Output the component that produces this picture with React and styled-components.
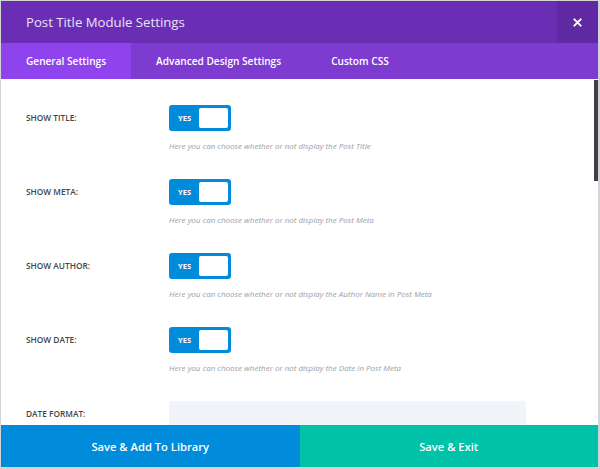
import styled, { createGlobalStyle } from "styled-components";

const GlobalStyle = createGlobalStyle`
  html, body {
    margin: 0;
    padding: 0;
    background: #d4d4d6;
  }
  * {
    box-sizing: border-box;
  }
`;

const rows = [
  { label: "Show Title:", help: "Here you can choose whether or not display the Post Title" },
  { label: "Show Meta:", help: "Here you can choose whether or not display the Post Meta" },
  { label: "Show Author:", help: "Here you can choose whether or not display the Author Name in Post Meta" },
  { label: "Show Date:", help: "Here you can choose whether or not display the Date in Post Meta" },
];

const App = () => {
  return (
    <>
      <GlobalStyle />
      <Page>
        <Modal>
          <Header>
            <Title>Post Title Module Settings</Title>
            <CloseButton>
              <svg width="9" height="9" viewBox="0 0 10 10">
                <path d="M1.5 1.5 L8.5 8.5 M8.5 1.5 L1.5 8.5" stroke="#fff" strokeWidth="2.2" strokeLinecap="round" />
              </svg>
            </CloseButton>
          </Header>
          <Tabs>
            <Tab $active>General Settings</Tab>
            <Tab>Advanced Design Settings</Tab>
            <Tab>Custom CSS</Tab>
          </Tabs>
          <Body>
            {rows.map((row) => (
              <Row key={row.label}>
                <Label>{row.label}</Label>
                <Field>
                  <Toggle>
                    <span>Yes</span>
                    <Knob />
                  </Toggle>
                  <Help>{row.help}</Help>
                </Field>
              </Row>
            ))}
            <Row>
              <Label>Date Format:</Label>
              <Field>
                <Input />
              </Field>
            </Row>
            <ScrollThumb />
          </Body>
          <Footer>
            <FooterButton $color="#008bdb">Save &amp; Add To Library</FooterButton>
            <FooterButton $color="#00c2a8">Save &amp; Exit</FooterButton>
          </Footer>
        </Modal>
      </Page>
    </>
  );
};

export default App;

const Page = styled.div`
  width: 600px;
  height: 469px;
  padding: 1px 2px 2px 1px;
  font-family: "Open Sans", "Liberation Sans", sans-serif;
`;

const Modal = styled.div`
  height: 100%;
  display: flex;
  flex-direction: column;
  background: #fff;
  overflow: hidden;
`;

const Header = styled.div`
  height: 42px;
  flex: none;
  display: flex;
  align-items: center;
  background: #6a2eb4;
`;

const Title = styled.h1`
  flex: 1;
  margin: 0;
  padding-left: 25px;
  font-size: 13.2px;
  font-weight: 400;
  color: #ebe2f7;
`;

const CloseButton = styled.div`
  width: 41px;
  height: 100%;
  display: flex;
  align-items: center;
  justify-content: center;
  background: #5f29a4;
`;

const Tabs = styled.div`
  height: 36px;
  flex: none;
  display: flex;
  background: #7e3bd0;
`;

const Tab = styled.div`
  display: flex;
  align-items: center;
  padding: 0 25px;
  font-size: 10.1px;
  font-weight: 600;
  color: #fff;
  background: ${(p) => (p.$active ? "#8f43ec" : "transparent")};
`;

const Body = styled.div`
  position: relative;
  flex: 1;
  overflow: hidden;
  padding-top: 26px;
`;

const Row = styled.div`
  display: flex;
  align-items: flex-start;
  padding-left: 25px;
  margin-bottom: 27px;
`;

const Label = styled.div`
  width: 143px;
  line-height: 26px;
  font-size: 8.3px;
  font-weight: 600;
  text-transform: uppercase;
  color: #3f454b;
`;

const Field = styled.div`
  display: flex;
  flex-direction: column;
`;

const Toggle = styled.div`
  width: 62px;
  height: 26px;
  display: flex;
  align-items: center;
  justify-content: space-between;
  padding: 0 3px 0 9px;
  border-radius: 3px;
  background: #008bdb;
  span {
    font-size: 7.5px;
    font-weight: 700;
    text-transform: uppercase;
    color: #fff;
  }
`;

const Knob = styled.div`
  width: 29px;
  height: 20px;
  border-radius: 2px;
  background: #fff;
`;

const Help = styled.div`
  margin-top: 8px;
  line-height: 13px;
  font-size: 8px;
  font-style: italic;
  color: #9aa0a8;
`;

const Input = styled.div`
  width: 357px;
  height: 40px;
  border-radius: 3px;
  background: #f1f4f8;
`;

const ScrollThumb = styled.div`
  position: absolute;
  top: 1px;
  right: 0;
  width: 4px;
  height: 101px;
  background: #3d4147;
`;

const Footer = styled.div`
  height: 42px;
  flex: none;
  display: flex;
`;

const FooterButton = styled.div`
  flex: 1;
  display: flex;
  align-items: center;
  justify-content: center;
  font-size: 11.2px;
  font-weight: 600;
  color: #fff;
  background: ${(p) => p.$color};
`;
